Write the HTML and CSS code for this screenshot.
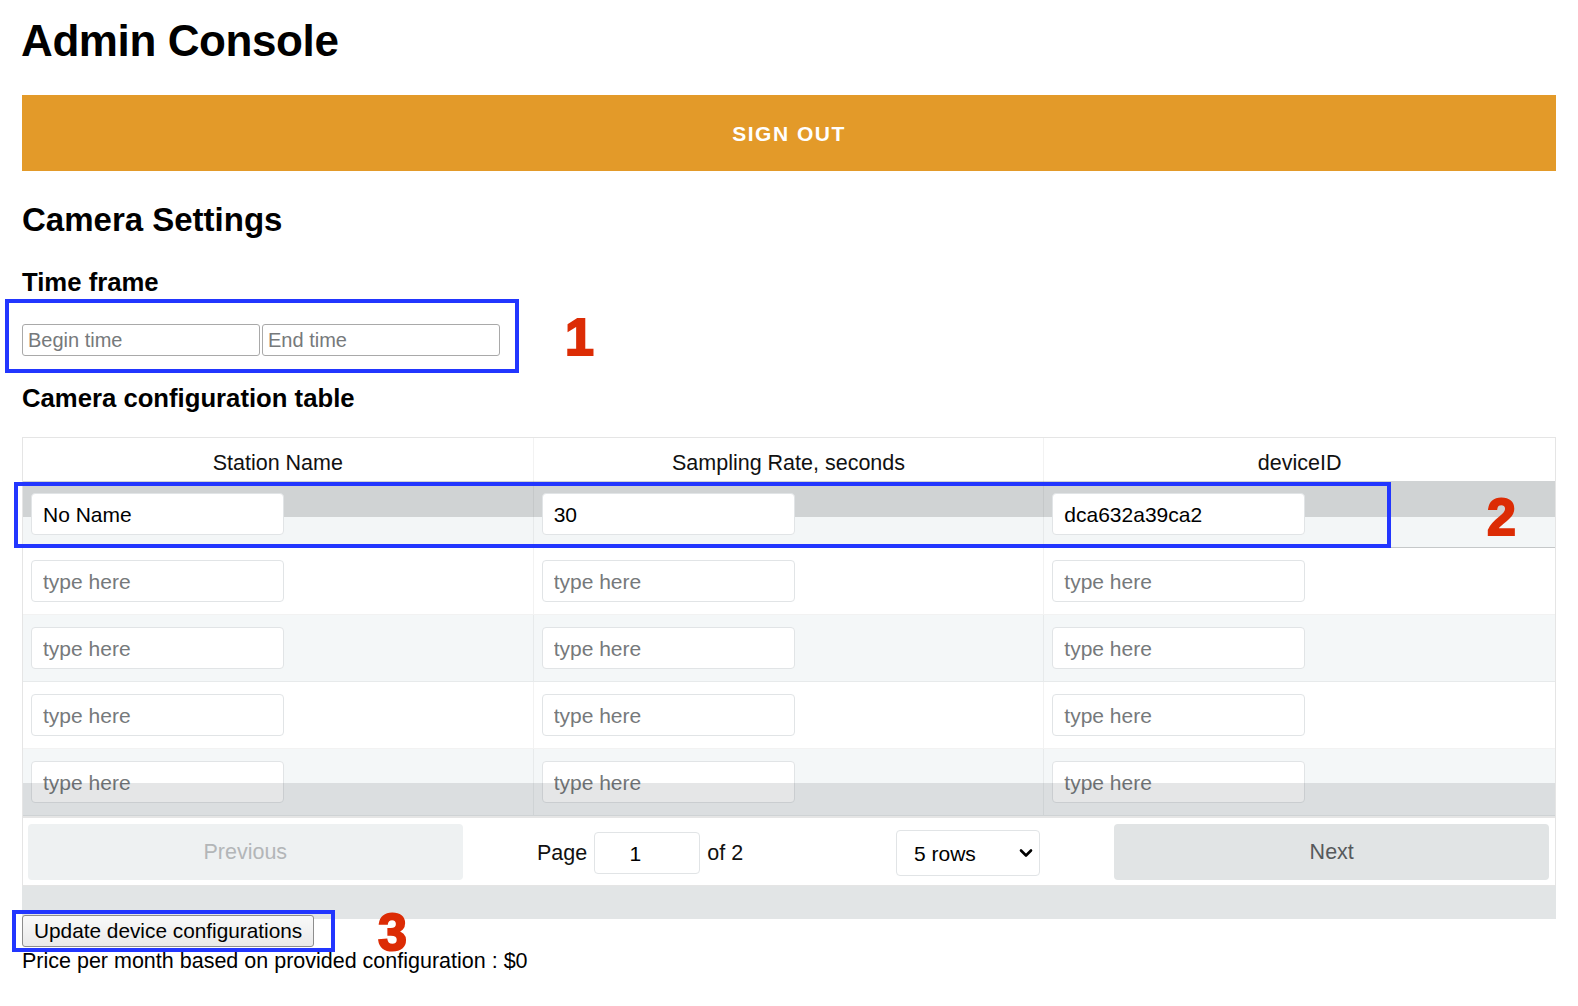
FILE: index.html
```html
<!DOCTYPE html>
<html lang="en">
<head>
<meta charset="utf-8">
<title>Admin Console</title>
<link rel="stylesheet" href="styles.css">
</head>
<body>
<div class="page">
  <h1 class="title">Admin Console</h1>
  <button class="signout">SIGN OUT</button>

  <h2 class="section-title">Camera Settings</h2>

  <h3 class="sub-title">Time frame</h3>
  <div class="timeframe">
    <input class="time-input" type="text" placeholder="Begin time">
    <input class="time-input" type="text" placeholder="End time">
  </div>

  <h3 class="sub-title">Camera configuration table</h3>

  <div class="rt-table">
    <div class="thead">
      <div class="th">Station Name</div>
      <div class="th">Sampling Rate, seconds</div>
      <div class="th">deviceID</div>
    </div>
    <div class="tbody">
      <div class="tr first">
        <div class="td"><input class="cell-input" type="text" value="No Name"></div>
        <div class="td"><input class="cell-input" type="text" value="30"></div>
        <div class="td"><input class="cell-input" type="text" value="dca632a39ca2"></div>
      </div>
      <div class="tr">
        <div class="td"><input class="cell-input" type="text" placeholder="type here"></div>
        <div class="td"><input class="cell-input" type="text" placeholder="type here"></div>
        <div class="td"><input class="cell-input" type="text" placeholder="type here"></div>
      </div>
      <div class="tr odd">
        <div class="td"><input class="cell-input" type="text" placeholder="type here"></div>
        <div class="td"><input class="cell-input" type="text" placeholder="type here"></div>
        <div class="td"><input class="cell-input" type="text" placeholder="type here"></div>
      </div>
      <div class="tr">
        <div class="td"><input class="cell-input" type="text" placeholder="type here"></div>
        <div class="td"><input class="cell-input" type="text" placeholder="type here"></div>
        <div class="td"><input class="cell-input" type="text" placeholder="type here"></div>
      </div>
      <div class="tr odd">
        <div class="td"><input class="cell-input" type="text" placeholder="type here"></div>
        <div class="td"><input class="cell-input" type="text" placeholder="type here"></div>
        <div class="td"><input class="cell-input" type="text" placeholder="type here"></div>
      </div>
    </div>
    <div class="pagination">
      <div class="pg-side"><button class="pg-btn prev" disabled>Previous</button></div>
      <div class="pg-center">
        <span class="page-info">Page <input class="page-input" type="text" value="1"> of 2</span>
        <span class="select-wrap">
          <select class="rows-select"><option>5 rows</option><option>10 rows</option></select>
          <svg class="chevron" width="14" height="10" viewBox="0 0 14 10"><path d="M2 2.5 L7 7.5 L12 2.5" fill="none" stroke="#000" stroke-width="2.6" stroke-linecap="round" stroke-linejoin="round"/></svg>
        </span>
      </div>
      <div class="pg-side"><button class="pg-btn next">Next</button></div>
    </div>
  </div>
  <div class="footer-band"></div>

  <button class="update-btn">Update device configurations</button>
  <div class="price">Price per month based on provided configuration : $0</div>

  <div class="anno-box box1"></div>
  <div class="anno-box box2"></div>
  <div class="anno-box box3"></div>
  <div class="anno-num num1">1</div>
  <div class="anno-num num2">2</div>
  <div class="anno-num num3">3</div>
</div>
</body>
</html>
```

FILE: styles.css
```css
html, body {
  margin: 0;
  padding: 0;
  background: #fff;
}

body {
  font-family: "Liberation Sans", Arial, Helvetica, sans-serif;
  font-size: 21.5px;
  color: #000;
}

.page {
  position: relative;
  padding: 16px 22px 20px;
}

.title {
  margin: 0 0 0 -1px;
  font-size: 44px;
  line-height: 50px;
  font-weight: bold;
  letter-spacing: -0.4px;
}

.signout {
  display: flex;
  align-items: center;
  justify-content: center;
  width: 100%;
  height: 76px;
  margin-top: 29px;
  padding-top: 2px;
  border: none;
  background: #e39a29;
  color: #fff;
  font-family: inherit;
  font-size: 21px;
  font-weight: bold;
  letter-spacing: 1.5px;
}

.section-title {
  margin: 30px 0 0;
  font-size: 33px;
  line-height: 37px;
  font-weight: bold;
}

.sub-title {
  margin: 30px 0 0;
  font-size: 25.7px;
  line-height: 29px;
  font-weight: bold;
}

.timeframe {
  display: flex;
  gap: 2px;
  margin-top: 27px;
  margin-bottom: 28px;
}

.timeframe + .sub-title {
  margin-top: 0;
}

.time-input {
  box-sizing: border-box;
  width: 238px;
  height: 32px;
  padding: 0 5px;
  border: 1px solid #a9a9a9;
  border-radius: 3px;
  font-family: inherit;
  font-size: 20px;
  color: #000;
}

.time-input::placeholder,
.cell-input::placeholder {
  color: #76797b;
}

.rt-table {
  margin-top: 24px;
  border: 1px solid rgba(0, 0, 0, 0.1);
}

.thead {
  display: grid;
  grid-template-columns: repeat(3, 1fr);
  height: 43px;
}

.th {
  display: flex;
  align-items: center;
  justify-content: center;
  padding-top: 7px;
  border-right: 1px solid rgba(0, 0, 0, 0.05);
  color: #111;
}

.th:last-child,
.td:last-child {
  border-right: none;
}

.tr {
  display: grid;
  grid-template-columns: repeat(3, 1fr);
  box-sizing: border-box;
  height: 67px;
  border-bottom: 1px solid rgba(0, 0, 0, 0.05);
}

.tr.odd {
  background: #f4f7f8;
}

.tr.first {
  background: linear-gradient(#d0d3d4 0, #d0d3d4 36px, #f3f6f7 36px, #f3f6f7 100%);
}

.td {
  padding: 12px 8px;
  border-right: 1px solid rgba(0, 0, 0, 0.05);
}

.cell-input {
  box-sizing: border-box;
  width: 253px;
  height: 42px;
  padding: 1px 11px 0;
  border: 1px solid #e1e4e6;
  border-radius: 4px;
  background: #fff;
  font-family: inherit;
  font-size: 21px;
  color: #000;
}

.pagination {
  position: relative;
  display: flex;
  box-sizing: border-box;
  height: 69px;
  padding: 6px 6px 5px 5px;
  border-top: 2px solid rgba(0, 0, 0, 0.1);
  background: #fff;
  box-shadow: 0 -33px 0 0 rgba(0, 12, 18, 0.1);
}

.pg-side {
  flex: 1;
  display: flex;
}

.pg-btn {
  width: 100%;
  height: 100%;
  padding-top: 2px;
  border: none;
  border-radius: 4px;
  font-family: inherit;
  font-size: 21.5px;
}

.prev {
  background: #eef1f2;
  color: #b3b6b8;
}

.next {
  background: #e1e4e5;
  color: #56595b;
}

.pg-center {
  flex: 1.5;
  display: flex;
  align-items: center;
  justify-content: space-around;
  padding-top: 2px;
}

.page-info {
  display: flex;
  align-items: center;
  color: #111;
}

.page-input {
  box-sizing: border-box;
  width: 106px;
  height: 42px;
  margin: 0 7px;
  padding: 1px 24px 0 0;
  border: 1px solid #e1e4e6;
  border-radius: 4px;
  text-align: center;
  font-family: inherit;
  font-size: 21px;
  color: #000;
}

.select-wrap {
  position: relative;
  display: block;
  width: 144px;
  height: 46px;
  margin-left: 4px;
}

.rows-select {
  appearance: none;
  -webkit-appearance: none;
  box-sizing: border-box;
  width: 100%;
  height: 100%;
  padding: 1px 0 0 17px;
  border: 1px solid #e1e4e6;
  border-radius: 4px;
  background: #fff;
  font-family: inherit;
  font-size: 21px;
  color: #000;
}

.chevron {
  position: absolute;
  right: 7px;
  top: 18px;
  pointer-events: none;
}

.footer-band {
  height: 33px;
  background: #e2e5e6;
}

.update-btn {
  display: block;
  box-sizing: border-box;
  height: 32px;
  margin: -4px 0 0;
  padding: 0 11px;
  border: 1px solid #8d8d8d;
  border-radius: 3px;
  background: linear-gradient(#f9f9f9, #e9e9e9);
  font-family: inherit;
  font-size: 20.8px;
  color: #000;
}

.price {
  line-height: 28px;
}

.anno-box {
  position: absolute;
  border: 4px solid #2236ff;
  box-sizing: border-box;
}

.box1 {
  left: 5px;
  top: 299px;
  width: 514px;
  height: 74px;
}

.box2 {
  left: 14px;
  top: 482px;
  width: 1377px;
  height: 66px;
}

.box3 {
  left: 12px;
  top: 910px;
  width: 323px;
  height: 42px;
}

.anno-num {
  position: absolute;
  font-family: "Liberation Sans", Arial, sans-serif;
  font-weight: bold;
  font-size: 52px;
  line-height: 52px;
  color: #dc2c05;
  -webkit-text-stroke: 2px #dc2c05;
}

.num1 {
  left: 565px;
  top: 311px;
}

.num2 {
  left: 1487px;
  top: 491px;
}

.num3 {
  left: 378px;
  top: 906px;
}
```
